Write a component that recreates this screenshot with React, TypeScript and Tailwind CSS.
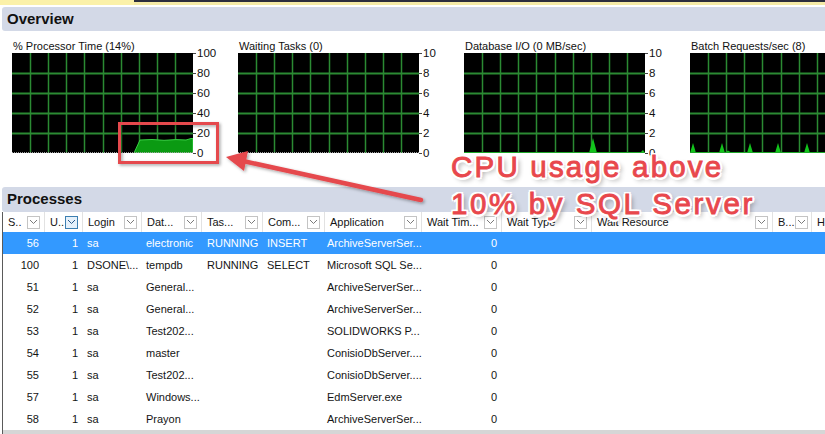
import type { ReactNode } from "react";

type Col = { label: string; w: string; active?: boolean; noBox?: boolean };

const columns: Col[] = [
  { label: "S..", w: "w-[42px]" },
  { label: "U..", w: "w-[38px]", active: true },
  { label: "Login", w: "w-[59px]" },
  { label: "Dat...", w: "w-[60px]" },
  { label: "Tas...", w: "w-[61px]" },
  { label: "Com...", w: "w-[62px]" },
  { label: "Application", w: "w-[97px]" },
  { label: "Wait Tim...", w: "w-[80px]" },
  { label: "Wait Type", w: "w-[90px]" },
  { label: "Wait Resource", w: "w-[181px]" },
  { label: "B...", w: "w-[39px]" },
  { label: "H", w: "w-[40px]", noBox: true },
];

const rows = [
  ["56", "1", "sa", "electronic", "RUNNING", "INSERT", "ArchiveServerSer...", "0"],
  ["100", "1", "DSONE\\...", "tempdb", "RUNNING", "SELECT", "Microsoft SQL Se...", "0"],
  ["51", "1", "sa", "General...", "", "", "ArchiveServerSer...", "0"],
  ["52", "1", "sa", "General...", "", "", "ArchiveServerSer...", "0"],
  ["53", "1", "sa", "Test202...", "", "", "SOLIDWORKS P...", "0"],
  ["54", "1", "sa", "master", "", "", "ConisioDbServer....", "0"],
  ["55", "1", "sa", "Test202...", "", "", "ConisioDbServer....", "0"],
  ["57", "1", "sa", "Windows...", "", "", "EdmServer.exe", "0"],
  ["58", "1", "sa", "Prayon", "", "", "ArchiveServerSer...", "0"],
];

const gridX = [1, 2, 3, 4, 5, 6, 7, 8, 9].map((i) => Math.round(i * 18.1));
const gridY = [20, 40, 60, 80];

function FilterBox({ active }: { active?: boolean }) {
  return (
    <span
      className={
        active
          ? "flex h-[13px] w-[13px] shrink-0 items-center justify-center border border-[#3c7fb1] bg-[#e5f1fb]"
          : "flex h-[13px] w-[13px] shrink-0 items-center justify-center border border-[#c4c4c4] bg-white"
      }
    >
      <svg width="9" height="6" viewBox="0 0 9 6">
        <polyline points="1,1 4.5,4.5 8,1" fill="none" stroke={active ? "#2a5a8a" : "#7a7a7a"} strokeWidth="1" />
      </svg>
    </span>
  );
}

function Chart({ title, labels, baseline, children }: { title: string; labels: string[]; baseline?: boolean; children?: ReactNode }) {
  return (
    <div className="w-[226px] shrink-0">
      <div className="h-[13px] whitespace-nowrap pl-[1px] text-[11px] leading-[13px] text-[#111]">{title}</div>
      <div className="flex">
        <div className="h-[100px] w-[181px] shrink-0 bg-black">
          <svg width="181" height="100" viewBox="0 0 181 100">
            {gridX.map((x) => (
              <rect key={"x" + x} x={x - 0.25} y="0" width="1.5" height="100" fill="#2b8a33" />
            ))}
            {gridY.map((y) => (
              <rect key={"y" + y} x="0" y={y - 0.5} width="181" height="2" fill="#2b8a33" />
            ))}
            {children}
            {baseline ? (
              <rect x="0" y="99" width="181" height="1" fill="#1fa82a" />
            ) : (
              <path d="M0 99.5H181" stroke="#9a9a9a" strokeWidth="1" strokeDasharray="1 1" />
            )}
          </svg>
        </div>
        <div className="-mt-[7px] flex h-[114px] flex-col justify-between">
          {labels.map((l, i) => (
            <div key={i} className="flex h-[14px] items-center">
              <span className="h-px w-[3px] bg-[#444]" />
              <span className="ml-[1px] text-[11.5px] leading-[14px] text-[#111]">{l}</span>
            </div>
          ))}
        </div>
      </div>
    </div>
  );
}

export default function App() {
  const pct = ["100", "80", "60", "40", "20", "0"];
  const ten = ["10", "8", "6", "4", "2", "0"];
  return (
    <div className="relative h-[434px] w-[825px] overflow-hidden bg-white font-['Liberation_Sans',Arial,sans-serif]">
      {/* window chrome strip */}
      <div className="flex h-[5px]">
        <div className="w-[134px] bg-[#fbf1a9]" />
        <div className="flex flex-1 flex-col">
          <div className="h-[2px] bg-[#2b2d3c]" />
          <div className="h-[3px] bg-[#f4eaa6]" />
        </div>
      </div>

      <div className="ml-[2px] mt-[2px] flex h-[24px] items-center rounded-l-[3px] bg-[#d3d9e7] pl-[5px] text-[15px] font-bold text-[#111]">
        Overview
      </div>

      <div className="flex h-[156px] pl-[12px] pt-[9px]">
        <Chart title="% Processor Time (14%)" labels={pct}>
          <polygon
            points="122,100 128,87 140,86.5 152,87.3 164,86.6 174,87 179,85.5 181,85.5 181,100"
            fill="#0b9a12"
            stroke="#39d045"
            strokeWidth="1"
          />
        </Chart>
        <Chart title="Waiting Tasks (0)" labels={ten} />
        <Chart title="Database I/O (0 MB/sec)" labels={ten} baseline>
          <polygon points="125,100 129,85 133,100" fill="#12c41c" />
          <polygon points="176,100 179,97 181,100" fill="#12c41c" />
        </Chart>
        <Chart title="Batch Requests/sec (8)" labels={ten} baseline>
          {[3, 32, 60, 88, 117, 146, 174].map((x) => (
            <polygon key={x} points={`${x - 3},100 ${x},90 ${x + 3},100`} fill="#12c41c" />
          ))}
          <polygon points="35,100 38,97.5 42,100" fill="#12c41c" />
        </Chart>
      </div>

      <div className="ml-[2px] flex h-[25px] items-center rounded-l-[3px] bg-[#d3d9e7] pl-[5px] text-[15px] font-bold text-[#111]">
        Processes
      </div>

      {/* grid */}
      <div className="ml-[2px] border-l border-[#5a5a5a] text-[11px] text-[#141414]">
        <div className="flex h-[20px] whitespace-nowrap bg-white">
          {columns.map((c) => (
            <div
              key={c.label}
              className={`${c.w} flex shrink-0 items-center justify-between overflow-hidden border-r border-[#e2e2e2] pl-[5px] pr-[4px]`}
            >
              <span>{c.label}</span>
              {!c.noBox && <FilterBox active={c.active} />}
            </div>
          ))}
        </div>
        {rows.map((r, i) => {
          const sel = i === 0;
          return (
            <div
              key={r[0]}
              className={sel ? "flex h-[22px] items-center whitespace-nowrap bg-[#3399ff] text-white" : "flex h-[22px] items-center whitespace-nowrap"}
            >
              <div className="w-[42px] shrink-0 pr-[6px] text-right">{r[0]}</div>
              <div className="w-[38px] shrink-0 pr-[5px] text-right">{r[1]}</div>
              <div className="w-[59px] shrink-0 pl-[4px]">{r[2]}</div>
              <div className="w-[60px] shrink-0 pl-[4px]">{r[3]}</div>
              <div className="w-[61px] shrink-0 pl-[5px]">{r[4]}</div>
              <div className="w-[62px] shrink-0 pl-[4px]">{r[5]}</div>
              <div className="w-[97px] shrink-0 pl-[2px]">{r[6]}</div>
              <div className="w-[80px] shrink-0 pr-[5px] text-right">{r[7]}</div>
              <div className="flex-1" />
            </div>
          );
        })}
        <div className="h-[4px] bg-[#d6d6d6]" />
      </div>

      {/* annotation overlay */}
      <svg className="pointer-events-none absolute left-0 top-0" width="825" height="434" viewBox="0 0 825 434">
        <defs>
          <filter id="sh" x="-20%" y="-20%" width="140%" height="140%">
            <feDropShadow dx="1.5" dy="1.5" stdDeviation="1.5" floodColor="#000" floodOpacity="0.35" />
          </filter>
        </defs>
        <g filter="url(#sh)">
          <rect x="119.5" y="123.5" width="98" height="39" fill="none" stroke="#e5484d" strokeWidth="3" />
          <line x1="421" y1="200" x2="243" y2="161" stroke="#e5484d" strokeWidth="4.5" strokeLinecap="round" />
          <polygon points="226,157 248,151 244,171" fill="#e5484d" />
        </g>
      </svg>
      <div className="pointer-events-none absolute left-[451px] top-[148px] text-[29.5px] leading-[37px] text-[#e8474c] [-webkit-text-stroke:0.9px_#e8474c] [text-shadow:-2px_-2px_0_#fff,2px_-2px_0_#fff,-2px_2px_0_#fff,2px_2px_0_#fff,0_-2.5px_0_#fff,0_2.5px_0_#fff,-2.5px_0_0_#fff,2.5px_0_0_#fff,3px_3px_5px_rgba(0,0,0,0.45)]">
        <div className="whitespace-nowrap tracking-[2.2px]">CPU usage above</div>
        <div className="whitespace-nowrap tracking-[2.6px]">10% by SQL Server</div>
      </div>
    </div>
  );
}
